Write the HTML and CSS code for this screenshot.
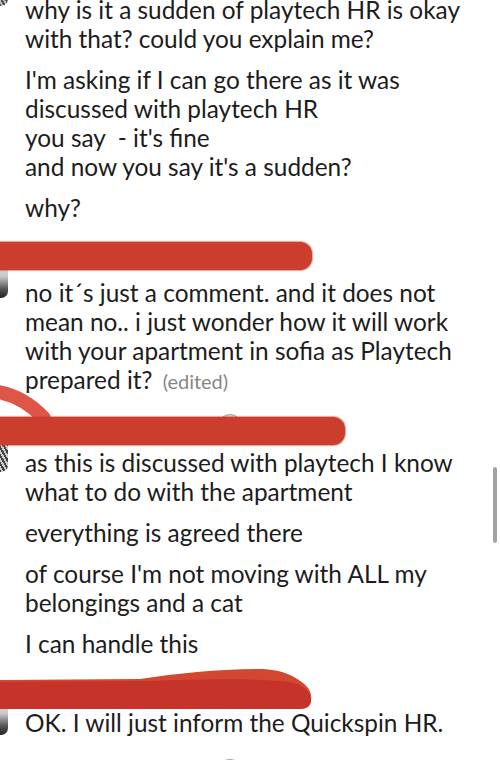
FILE: index.html
```html
<!DOCTYPE html>
<html lang="en">
<head>
    <meta charset="UTF-8">
    <meta name="viewport" content="width=device-width, initial-scale=1.0">
    <title>Conversation</title>
    <link rel="stylesheet" href="styles.css">
</head>
<body>

<div class="screen">
    <div class="feed">

        <section class="msg">
            <div class="avatar avatar-top"></div>
            <p>why is it a sudden of playtech HR is okay with that? could you explain me?</p>
            <p>I'm asking if I can go there as it was discussed with playtech HR<br>you say &nbsp;- it's fine<br>and now you say it's a sudden?</p>
            <p>why?</p>
        </section>

        <section class="msg">
            <div class="sender sender-a">
                <span class="redact redact-a"></span>
            </div>
            <div class="avatar avatar-a"></div>
            <p>no it´s just a comment. and it does not mean no.. i just wonder how it will work with your apartment in sofia as Playtech prepared it? <span class="edited">(edited)</span></p>
            <div class="peek"></div>
        </section>

        <section class="msg">
            <div class="sender sender-b">
                <!-- marker stroke that runs into the bar -->
                <svg class="scribble" width="60" height="50" viewBox="0 0 60 50">
                    <path d="M-10 15 Q20 17 44 42" fill="none" stroke="#df5547" stroke-width="14" stroke-linecap="round"/>
                </svg>
                <span class="redact redact-b"></span>
            </div>
            <div class="avatar avatar-b"></div>
            <p>as this is discussed with playtech I know what to do with the apartment</p>
            <p>everything is agreed there</p>
            <p>of course I'm not moving with ALL my belongings and a cat</p>
            <p>I can handle this</p>
        </section>

        <section class="msg">
            <div class="sender sender-c">
                <svg class="redact-wave" width="312" height="40" viewBox="0 0 312 40">
                    <path d="M0 11 L140 10 C180 4 220 0 262 0 C285 1 295 8 303 14 C310 19 312 26 311 32 C310 37 306 39 300 40 L0 40 Z" fill="#d2472f"/>
                    <path d="M0 13 L150 12 C200 10 255 9 290 13 C304 16 311 23 311 31 C311 37 307 40 300 40 L0 40 Z" fill="#c6332a"/>
                </svg>
            </div>
            <div class="avatar avatar-c"></div>
            <p>OK. I will just inform the Quickspin HR.</p>
            <div class="peek peek-low"></div>
        </section>

    </div>
    <div class="scrollbar"></div>
</div>

</body>
</html>
```

FILE: styles.css
```css
body {
    margin: 0;
    background-color: #fff;
    color: #1d1c1d;
    font-family: Lato, "Noto Sans", sans-serif;
    font-size: 24.4px;
    line-height: 29px;
}
.screen {
    position: relative;
    width: 500px;
    height: 760px;
    overflow: hidden;
}
.feed {
    display: flex;
    flex-direction: column;
    margin-top: -5px;
}
.msg {
    position: relative;
    display: flex;
    flex-direction: column;
    gap: 12px;
    padding-left: 25px;
    padding-right: 10px;
}
.msg p {
    margin: 0;
}
.edited {
    margin-left: 4px;
    color: #868686;
    font-size: 20px;
}

/* name row, hidden under a marker bar */
.sender {
    position: relative;
    margin-left: -25px;
    margin-bottom: -12px;
    box-sizing: border-box;
}
.sender-a {
    height: 56px;
    padding-top: 20px;
}
.sender-b {
    height: 52px;
    padding-top: 21px;
}
.sender-c {
    height: 50px;
    padding-top: 11px;
}
.redact {
    position: relative;
    z-index: 2;
    display: block;
    height: 28px;
    background-color: #cb3d2d;
    border-radius: 0 12px 12px 0;
    box-shadow: 0 0 1px 1px rgba(203, 61, 45, 0.5);
}
.redact-a {
    width: 312px;
}
.redact-b {
    width: 345px;
}
.redact-wave {
    position: relative;
    z-index: 2;
    display: block;
}
.scribble {
    position: absolute;
    left: 0;
    top: -20px;
    z-index: 1;
}

/* avatars sit mostly off the left edge */
.avatar {
    position: absolute;
    left: -40px;
    width: 48px;
    height: 48px;
    border-radius: 7px;
    background: linear-gradient(to bottom, #f2f2f2, #c9c9c9 55%, #5a5a5a 80%, #222);
}
.avatar-top {
    top: -37px;
    background: repeating-linear-gradient(60deg, #bbb 0 2px, #555 2px 4px);
}
.avatar-a {
    top: 28px;
}
.avatar-b {
    top: 28px;
    background: repeating-linear-gradient(60deg, #ccc 0 2px, #444 2px 4px);
}
.avatar-c {
    top: 29px;
}

.peek {
    position: absolute;
    left: 218px;
    top: calc(100% + 18px);
    width: 22px;
    height: 22px;
    border: 1.5px solid #9a9a9a;
    border-radius: 50%;
    background-color: #ecdcb4;
}
.peek-low {
    top: calc(100% + 22px);
}

.scrollbar {
    position: absolute;
    left: 493px;
    top: 467px;
    width: 4px;
    height: 76px;
    border-radius: 2px;
    background-color: #a2a2a2;
}
```
